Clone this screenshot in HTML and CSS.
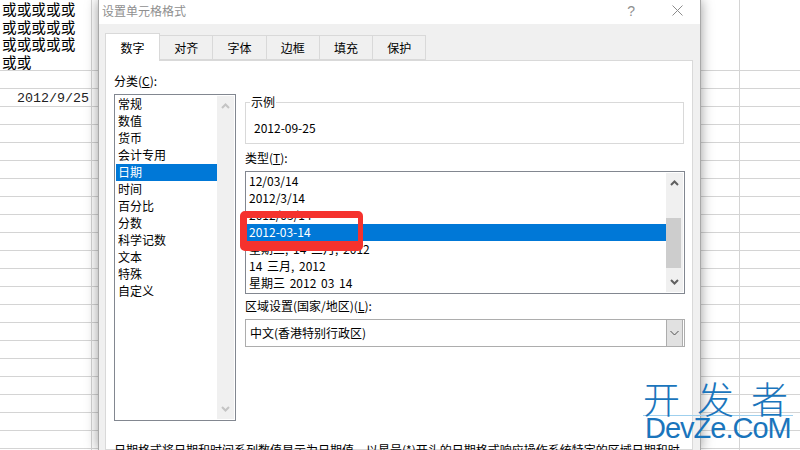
FILE: index.html
```html
<!DOCTYPE html>
<html lang="zh">
<head>
<meta charset="utf-8">
<title>设置单元格格式</title>
<link rel="stylesheet" href="styles.css">
</head>
<body>
<main class="sheet">
  <div class="cell-long">或或或或或或或或或或或或或或或或或</div>
  <div class="cell-blank"></div>
  <div class="cell-date">2012/9/25</div>
</main>

<section class="dialog">
  <header class="titlebar">
    <span class="title">设置单元格格式</span>
    <span class="help">?</span>
    <svg class="close" width="11" height="11" viewBox="0 0 11 11"><path d="M.5.5l10 10M10.5.5l-10 10" stroke="#8c8c8c" fill="none"/></svg>
  </header>
  <div class="body">
    <nav class="tabs">
      <span class="tab active">数字</span>
      <span class="tab">对齐</span>
      <span class="tab">字体</span>
      <span class="tab">边框</span>
      <span class="tab">填充</span>
      <span class="tab">保护</span>
    </nav>
    <div class="panel">
      <div class="columns">
        <div class="left">
          <div class="label">分类(<u>C</u>):</div>
          <div class="listbox cat">
            <ul class="items">
              <li>常规</li><li>数值</li><li>货币</li><li>会计专用</li>
              <li class="sel">日期</li><li>时间</li><li>百分比</li><li>分数</li>
              <li>科学记数</li><li>文本</li><li>特殊</li><li>自定义</li>
            </ul>
            <div class="scroll">
              <svg class="arrow" width="9" height="6" viewBox="0 0 9 6"><path d="M1 5l3.5-3.5L8 5" stroke="#c4c4c4" stroke-width="2" fill="none"/></svg>
              <svg class="arrow" width="9" height="6" viewBox="0 0 9 6"><path d="M1 1l3.5 3.5L8 1" stroke="#c4c4c4" stroke-width="2" fill="none"/></svg>
            </div>
          </div>
        </div>
        <div class="right">
          <div class="sample">
            <span class="legend">示例</span>
            <div class="sample-value">2012-09-25</div>
          </div>
          <div class="label type-label">类型(<u>T</u>):</div>
          <div class="listbox types">
            <ul class="items">
              <li>12/03/14</li><li>2012/3/14</li><li>2012/03/14</li>
              <li class="sel">2012-03-14</li><li>星期三, 14 三月, 2012</li>
              <li>14 三月, 2012</li><li>星期三 2012 03 14</li>
            </ul>
            <div class="scroll">
              <svg class="arrow" width="9" height="6" viewBox="0 0 9 6"><path d="M1 5l3.5-3.5L8 5" stroke="#606060" stroke-width="2" fill="none"/></svg>
              <div class="thumb"></div>
              <svg class="arrow" width="9" height="6" viewBox="0 0 9 6"><path d="M1 1l3.5 3.5L8 1" stroke="#606060" stroke-width="2" fill="none"/></svg>
            </div>
            <div class="marker"></div>
          </div>
          <div class="label locale-label">区域设置(国家/地区)(<u>L</u>):</div>
          <div class="combo">
            <span class="combo-text">中文(香港特别行政区)</span>
            <span class="combo-btn">
              <svg width="9" height="6" viewBox="0 0 9 6"><path d="M.5 1l4 4 4-4" stroke="#505050" fill="none"/></svg>
            </span>
          </div>
        </div>
      </div>
      <p class="desc">日期格式将日期和时间系列数值显示为日期值。以星号(*)开头的日期格式响应操作系统特定的区域日期和时</p>
    </div>
  </div>
</section>

<aside class="watermark">
  <div class="wm-cn">开发者</div>
  <div class="wm-en">DevZe.CoM</div>
</aside>
</body>
</html>
```
FILE: styles.css
```css
* { box-sizing: border-box; }
html, body { margin: 0; height: 100%; }
body {
  width: 800px;
  height: 450px;
  overflow: hidden;
  position: relative;
  background: #fff;
  color: #000;
  font-family: "Noto Sans CJK SC", "Liberation Sans", sans-serif;
  font-size: 12px;
}
ul { list-style: none; margin: 0; padding: 0; }
u { text-decoration: underline; text-underline-offset: 1px; }

.sheet {
  height: 450px;
  background-color: #fff;
  background-image:
    linear-gradient(#d4d4d4, #d4d4d4),
    linear-gradient(#d4d4d4, #d4d4d4),
    repeating-linear-gradient(to bottom, #d4d4d4 0, #d4d4d4 1px, transparent 1px, transparent 18px);
  background-size: 1px 100%, 1px 100%, 100% 100%;
  background-position: 91px 0, 739px 0, 0 70px;
  background-repeat: no-repeat;
}
.cell-long {
  width: 91px;
  height: 71px;
  padding: 0 14px 0 2px;
  font-size: 14.67px;
  line-height: 17.6px;
  overflow: hidden;
}
.cell-blank { height: 18px; }
.cell-date {
  width: 90px;
  height: 18px;
  padding-right: 1px;
  text-align: right;
  font-family: "Liberation Mono", monospace;
  font-size: 13.33px;
  line-height: 20px;
  color: #222;
}

.dialog {
  position: absolute;
  left: 98px;
  top: 0;
  width: 603px;
  height: 450px;
  background: #f0f0f0;
  border: 1px solid #a8a8a8;
  border-width: 0 1px;
  box-shadow: 0 0 12px rgba(0, 0, 0, .4);
  display: flex;
  flex-direction: column;
}
.titlebar {
  height: 24px;
  flex: none;
  background: #fff;
  display: flex;
  align-items: center;
  padding: 0 17px 3px 3px;
}
.title { color: #8f8f8f; flex: 1; }
.help { color: #8f8f8f; font-size: 14px; margin-right: 37px; font-family: "Liberation Sans", sans-serif; }
.close { display: block; }

.body { flex: 1; padding: 9px 7px 0 6px; display: flex; flex-direction: column; min-height: 0; }
.tabs { display: flex; height: 27px; flex: none; align-items: flex-end; position: relative; z-index: 1; }
.tab {
  width: 53.3px;
  height: 25px;
  border: 1px solid #d9d9d9;
  border-left: 0;
  border-bottom: 1px solid #d9d9d9;
  display: flex;
  align-items: center;
  justify-content: center;
  padding-bottom: 1px;
}
.tab.active {
  width: 55px;
  height: 28px;
  margin-bottom: -1px;
  background: #fff;
  border-left: 1px solid #d9d9d9;
  border-bottom: 0;
}
.panel {
  flex: 1;
  min-height: 0;
  background: #fff;
  border: 1px solid #d9d9d9;
  padding: 0 8px;
}
.columns { display: flex; gap: 9px; height: 380px; padding-top: 11px; }
.left { width: 122px; flex: none; }
.right { width: 440px; flex: none; padding-top: 30px; }
.label { height: 22px; line-height: 17px; }

.listbox { border: 1px solid #828790; display: flex; position: relative; background: #fff; }
.cat { height: 327px; }
.types { height: 123px; }
.items { flex: 1; min-width: 0; padding: 1px 0 0 1px; }
.items li { height: 17px; line-height: 16px; padding-left: 2px; white-space: nowrap; word-spacing: 2px; }
.items .sel { background: #0078d7; color: #fff; }

.scroll {
  width: 17px;
  flex: none;
  margin: 1px 1px 1px 0;
  background: #f0f0f0;
  display: flex;
  flex-direction: column;
  align-items: center;
  justify-content: space-between;
  padding: 7px 0;
  position: relative;
}
.arrow { display: block; }
.thumb {
  position: absolute;
  left: 0;
  top: 45px;
  width: 15px;
  height: 50px;
  background: #cdcdcd;
}
.marker {
  position: absolute;
  left: -6px;
  top: 39px;
  width: 123px;
  height: 40px;
  border: solid #f5322d;
  border-width: 7px 5px 10px 7px;
  border-radius: 5px;
}

.sample {
  height: 42px;
  border: 1px solid #d9d9d9;
  position: relative;
  margin-right: 1px;
  padding: 16px 8px 0;
  line-height: 17px;
}
.legend {
  position: absolute;
  left: 4px;
  top: -10px;
  padding: 0 1px;
  background: #fff;
  line-height: 17px;
}
.type-label { margin-top: 5px; }
.locale-label { margin-top: 3px; }

.combo {
  height: 28px;
  border: 1px solid #adadad;
  display: flex;
  align-items: center;
  padding-left: 4px;
}
.combo-text { flex: 1; padding-bottom: 1px; }
.combo-btn {
  width: 17px;
  height: 26px;
  margin-right: 1px;
  background: #e1e1e1;
  border: 1px solid #adadad;
  border-width: 0 1px;
  display: flex;
  align-items: center;
  justify-content: center;
}
.combo-btn svg { display: block; }

.desc { margin: 0; white-space: nowrap; line-height: 17px; }

.watermark {
  position: absolute;
  left: 643px;
  top: 380px;
  width: 150px;
  color: #1a75bc;
}
.wm-cn {
  font-size: 37px;
  line-height: 36px;
  font-weight: 300;
  letter-spacing: 17px;
  white-space: nowrap;
  height: 36px;
  border-bottom: 1px solid #9fd0ee;
}
.wm-en {
  padding-left: 2px;
  font-family: "Liberation Sans", sans-serif;
  font-size: 29px;
  letter-spacing: -1px;
  line-height: 25px;
  white-space: nowrap;
}
```
